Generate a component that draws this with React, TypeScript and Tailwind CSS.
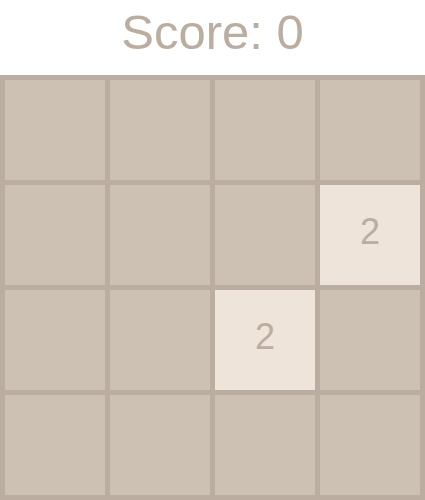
export default function App() {
  const tiles: (number | null)[] = [
    null, null, null, null,
    null, null, null, 2,
    null, null, 2, null,
    null, null, null, null,
  ];
  return (
    <div className="w-[425px] bg-white" style={{ fontFamily: '"Liberation Sans", Arial, sans-serif' }}>
      <div className="h-[75px] flex items-start justify-center pt-[8px] text-[49px] leading-none text-[#bbada0]">
        Score: 0
      </div>
      <div className="grid grid-cols-4 gap-[5px] p-[5px] bg-[#bbada0]">
        {tiles.map((v, i) => (
          <div
            key={i}
            className={`h-[100px] flex items-center justify-center pb-[6px] text-[36px] ${v ? 'bg-[#eee4da] text-[#bbada0]' : 'bg-[#cdc1b4]'}`}
          >
            {v ?? ''}
          </div>
        ))}
      </div>
    </div>
  );
}
